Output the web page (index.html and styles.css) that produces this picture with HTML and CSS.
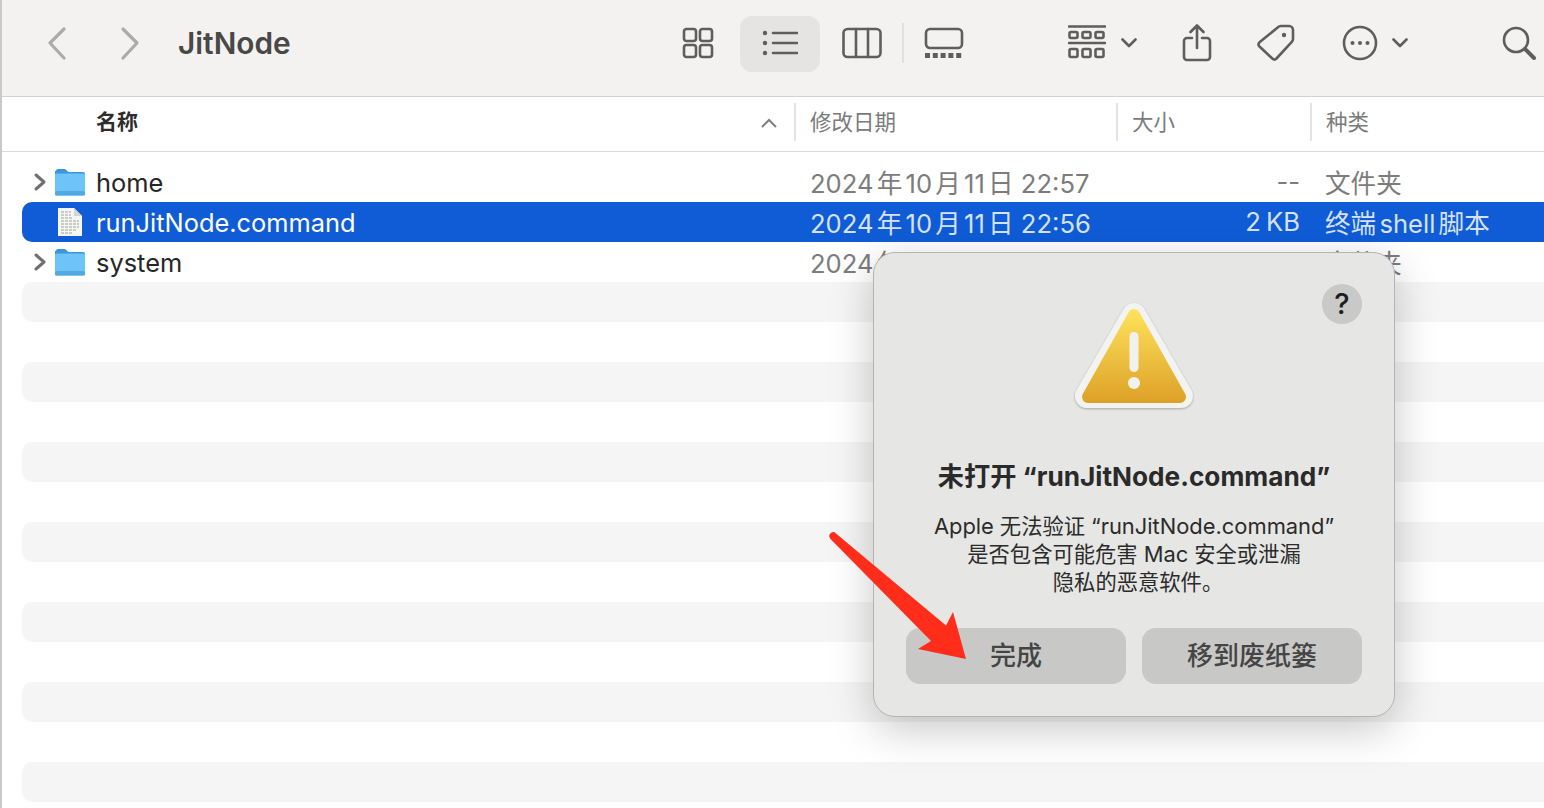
FILE: index.html
```html
<!DOCTYPE html>
<html lang="zh-CN">
<head>
<meta charset="utf-8">
<title>JitNode</title>
<link rel="stylesheet" href="styles.css">
</head>
<body>
<div class="window">
  <header class="toolbar">
    <svg class="ic back" viewBox="0 0 22 36"><path d="M18 4 4 18l14 15" class="thin"/></svg>
    <svg class="ic forward" viewBox="0 0 22 36"><path d="M4 4l14 14L4 33" class="thin"/></svg>
    <h1 class="title">JitNode</h1>
    <svg class="ic grid-ic" viewBox="0 0 32 32"><rect x="2" y="2" width="12" height="12" rx="2.5"/><rect x="18" y="2" width="12" height="12" rx="2.5"/><rect x="2" y="18" width="12" height="12" rx="2.5"/><rect x="18" y="18" width="12" height="12" rx="2.5"/></svg>
    <div class="list-btn">
      <svg class="ic list-ic" viewBox="0 0 36 28"><circle cx="3" cy="4" r="2.2" class="dot"/><circle cx="3" cy="14" r="2.2" class="dot"/><circle cx="3" cy="24" r="2.2" class="dot"/><path d="M11 4h24M11 14h24M11 24h24"/></svg>
    </div>
    <svg class="ic col-ic" viewBox="0 0 40 32"><rect x="1.5" y="2" width="37" height="28" rx="4"/><path d="M14 2v28M26 2v28"/></svg>
    <span class="tb-divider"></span>
    <svg class="ic gal-ic" viewBox="0 0 40 32"><rect x="2" y="2" width="36" height="19" rx="4"/><path class="dash" d="M1 28.500h38"/></svg>
    <svg class="ic grp-ic" viewBox="0 0 38 36"><path d="M1 1.500h36M1 18h36"/><rect x="1.500" y="7" width="8" height="6" rx="1.500"/><rect x="14.500" y="7" width="8" height="6" rx="1.500"/><rect x="27.500" y="7" width="8" height="6" rx="1.500"/><rect x="1.500" y="24" width="8" height="8" rx="1.500"/><rect x="14.500" y="24" width="8" height="8" rx="1.500"/><rect x="27.500" y="24" width="8" height="8" rx="1.500"/></svg>
    <svg class="ic chev chev-a" viewBox="0 0 16 10"><path d="M1.500 1.500 8 8l6.500-6.500"/></svg>
    <svg class="ic share-ic" viewBox="0 0 30 38"><path d="M10 14H5a3 3 0 0 0-3 3v16a3 3 0 0 0 3 3h20a3 3 0 0 0 3-3V17a3 3 0 0 0-3-3h-5"/><path d="M15 24V2M8.500 8 15 1.500 21.500 8"/></svg>
    <svg class="ic tag-ic" viewBox="0 0 38 38"><path d="M24 2h8a4 4 0 0 1 4 4v9a4 4 0 0 1-1.200 2.800L19.500 34.500a3 3 0 0 1-4.200 0L2.500 22.500a3 3 0 0 1 0-4.200L21 3.200A4 4 0 0 1 24 2z"/><circle cx="27" cy="11" r="2.200" class="dot"/></svg>
    <svg class="ic more-ic" viewBox="0 0 36 36"><circle cx="18" cy="18" r="16"/><circle cx="10.500" cy="18" r="2" class="dot"/><circle cx="18" cy="18" r="2" class="dot"/><circle cx="25.500" cy="18" r="2" class="dot"/></svg>
    <svg class="ic chev chev-b" viewBox="0 0 16 10"><path d="M1.500 1.500 8 8l6.500-6.500"/></svg>
    <svg class="ic search-ic" viewBox="0 0 34 34"><circle cx="14" cy="14" r="12"/><path d="M23 23l9 9" class="thick"/></svg>
  </header>

  <div class="table-head">
    <div class="th th-name"><span class="th-name-label">名称</span><svg class="sort" viewBox="0 0 16 10"><path d="M1 9l7-7 7 7"/></svg></div>
    <div class="th th-date">修改日期</div>
    <div class="th th-size">大小</div>
    <div class="th th-kind">种类</div>
  </div>

  <div class="rows">
    <div class="row">
      <div class="cell-name">
        <svg class="disc" viewBox="0 0 14 20"><path d="M3 3l8 7-8 7"/></svg>
        <svg class="folder" viewBox="0 0 30 28"><path d="M1 3a2 2 0 0 1 2-2h7l3.500 3H28a2 2 0 0 1 2 2v6H0V3z" class="f-top"/><rect y="5.500" width="30" height="22" rx="1.500" class="f-body"/><rect y="23" width="30" height="4.500" rx="1.500" class="f-low"/></svg>
        <span>home</span>
      </div>
      <div class="cell-date">2024年10月11日 22:57</div>
      <div class="cell-size">--</div>
      <div class="cell-kind">文件夹</div>
    </div>
    <div class="row selected">
      <div class="cell-name">
        <span class="disc-space"></span>
        <svg class="doc" viewBox="0 0 24 28"><path d="M0 0h16l8 8v20H0z" class="d-page"/><path d="M16 0l8 8h-8z" class="d-fold"/><path d="M3 4h10M3 7h10M3 10h12M3 13h18M3 16h18M3 19h18M3 22h16M3 25h12" class="d-lines"/></svg>
        <span>runJitNode.command</span>
      </div>
      <div class="cell-date">2024年10月11日 22:56</div>
      <div class="cell-size">2 KB</div>
      <div class="cell-kind">终端shell脚本</div>
    </div>
    <div class="row">
      <div class="cell-name">
        <svg class="disc" viewBox="0 0 14 20"><path d="M3 3l8 7-8 7"/></svg>
        <svg class="folder" viewBox="0 0 30 28"><path d="M1 3a2 2 0 0 1 2-2h7l3.500 3H28a2 2 0 0 1 2 2v6H0V3z" class="f-top"/><rect y="5.500" width="30" height="22" rx="1.500" class="f-body"/><rect y="23" width="30" height="4.500" rx="1.500" class="f-low"/></svg>
        <span>system</span>
      </div>
      <div class="cell-date">2024年10月11日 22:57</div>
      <div class="cell-size">--</div>
      <div class="cell-kind">文件夹</div>
    </div>
    <div class="row alt"></div><div class="row"></div>
    <div class="row alt"></div><div class="row"></div>
    <div class="row alt"></div><div class="row"></div>
    <div class="row alt"></div><div class="row"></div>
    <div class="row alt"></div><div class="row"></div>
    <div class="row alt"></div><div class="row"></div>
    <div class="row alt"></div>
  </div>

  <section class="dialog">
    <div class="help">?</div>
    <svg class="warn" viewBox="0 0 118 107">
      <defs>
        <linearGradient id="warnFill" gradientUnits="userSpaceOnUse" x1="0" y1="6" x2="0" y2="100"><stop offset="0" stop-color="#fee35c"/><stop offset="1" stop-color="#dda128"/></linearGradient>
      </defs>
      <polygon class="w-outer" points="59,12 12,93 106,93"/>
      <polygon class="w-inner" points="59,12 13,94 105,94"/>
      <rect class="w-mark" x="54.500" y="29" width="9" height="40" rx="4.500"/>
      <circle class="w-mark" cx="59" cy="80" r="6"/>
    </svg>
    <h2 class="d-title">未打开 “runJitNode.command”</h2>
    <p class="d-body"><span class="lat">Apple</span> 无法验证 <span class="lat">“runJitNode.command”</span><br>是否包含可能危害 <span class="lat">Mac</span> 安全或泄漏<br>隐私的恶意软件<span class="stop">。</span></p>
    <div class="d-actions">
      <button class="d-btn">完成</button>
      <button class="d-btn">移到废纸篓</button>
    </div>
  </section>

  <svg class="arrow" viewBox="0 0 150 140">
    <path d="M8 3.500 118 95.500 125 82 138 129 90 119 103 111 2 8.500Q0 5 3 3 6 1 8 3.500z"/>
  </svg>
</div>
</body>
</html>
```

FILE: styles.css
```css
* { box-sizing: border-box; }
html, body { margin: 0; padding: 0; height: 100%; overflow: hidden; background: #fff; }
body {
  font-family: Inter, "Noto Sans CJK SC", sans-serif;
  color: #262626;
}
.window {
  position: relative;
  width: 1544px;
  height: 808px;
  border-left: 2px solid #c9c9c9;
  overflow: hidden;
  text-autospace: normal;
}

/* toolbar */
.toolbar {
  height: 97px;
  background: #f3f2f1;
  border-bottom: 1px solid #d2d2d2;
  display: flex;
  align-items: center;
  padding-bottom: 9px;
}
.ic { flex: none; fill: none; stroke: #5f5e5c; stroke-width: 2.6; stroke-linecap: round; stroke-linejoin: round; margin-bottom: 2px; }
.ic .dot { fill: #5f5e5c; stroke: none; }
.ic .thin { stroke: #ababaa; stroke-width: 3.2; }
.ic .thick { stroke-width: 4; }
.ic .dash { stroke-width: 5; stroke-dasharray: 5 2.800; stroke-linecap: butt; }
.back { width: 22px; height: 36px; margin-left: 44px; }
.forward { width: 22px; height: 36px; margin-left: 51px; }
.title { margin: 0 0 2px 37px; width: 504px; font-size: 29.800px; font-weight: 600; color: #484847; }
.grid-ic { width: 32px; height: 32px; }
.list-btn { width: 80px; height: 56px; margin-left: 26px; background: #e5e4e3; border-radius: 12px; display: flex; align-items: center; justify-content: center; }
.list-ic { width: 36px; height: 28px; }
.col-ic { width: 40px; height: 32px; margin-left: 22px; }
.tb-divider { width: 2px; height: 40px; margin-left: 20px; margin-bottom: 2px; background: #e1e0df; }
.gal-ic { width: 40px; height: 32px; margin-left: 20px; }
.grp-ic { width: 38px; height: 36px; margin-left: 104px; }
.chev { width: 16px; height: 10px; }
.chev-a { margin-left: 15px; }
.share-ic { width: 30px; height: 38px; margin-left: 45px; }
.tag-ic { width: 38px; height: 38px; margin-left: 45px; }
.more-ic { width: 36px; height: 36px; margin-left: 47px; }
.chev-b { margin-left: 14px; }
.search-ic { width: 34px; height: 34px; margin-left: 94px; }

/* table head */
.table-head {
  height: 55px;
  background: #fff;
  border-bottom: 1px solid #dcdcdc;
  display: grid;
  grid-template-columns: 792px 322px 194px 1fr;
  align-items: center;
  padding-bottom: 5px;
}
.th { font-size: 21.500px; color: #7b7b7b; height: 38px; display: flex; align-items: center; padding: 0 0 3px 14px; border-left: 2px solid #e3e3e3; }
.th-name { border-left: 0; padding: 0 17px 3px 94px; justify-content: space-between; color: #2d2d2d; font-weight: 600; font-size: 21px; }
.sort { width: 16px; height: 10px; fill: none; stroke: #7f7f7f; stroke-width: 2; margin-top: 6px; }

/* rows */
.rows { padding: 10px 0 0 20px; }
.row {
  height: 40px;
  display: grid;
  grid-template-columns: 773px 322px 194px 1fr;
  align-items: center;
  font-size: 25.400px;
  border-radius: 10px 0 0 10px;
  white-space: nowrap;
}
.row.alt { background: #f4f5f4; }
.row.selected { background: #0f5cd6; color: #fff; }
.cell-name { display: flex; align-items: center; padding-left: 11px; }
.disc { width: 14px; height: 20px; fill: none; stroke: #6f6f6f; stroke-width: 3; stroke-linecap: round; stroke-linejoin: round; }
.disc-space { width: 14px; height: 20px; }
.folder { width: 30px; height: 28px; margin-left: 8px; margin-right: 11px; }
.f-top { fill: #3a96dc; }
.f-body { fill: #6ec3f8; }
.f-low { fill: #52a8e2; }
.doc { width: 24px; height: 28px; margin-left: 11px; margin-right: 14px; }
.d-page { fill: #f5f5f3; }
.d-fold { fill: #d3d3d1; }
.d-lines { fill: none; stroke: #bdbdbb; stroke-width: 1.500; stroke-dasharray: 3 1; }
.cell-date, .cell-kind, .cell-size { font-size: 25.600px; padding-bottom: 2px; color: #7c7c7c; }
.cell-date { padding-left: 15px; }
.cell-size { text-align: right; padding-right: 11px; word-spacing: -2px; }
.cell-kind { padding-left: 14px; }
.selected .cell-date, .selected .cell-size, .selected .cell-kind { color: #d6e2f6; }

/* dialog */
.dialog {
  position: absolute;
  left: 871px;
  top: 252px;
  width: 522px;
  height: 465px;
  background: #e6e6e4;
  border: 1px solid #b4b4b2;
  border-radius: 22px;
  box-shadow: 0 12px 44px rgba(0,0,0,.22);
  display: flex;
  flex-direction: column;
  align-items: center;
  padding: 50px 31px 0;
}
.help {
  position: absolute;
  right: 32px;
  top: 31px;
  width: 40px;
  height: 40px;
  border-radius: 50%;
  background: #c9c9c7;
  color: #1e1e1e;
  font-size: 29px;
  font-weight: 500;
  text-align: center;
  line-height: 40px;
}
.warn { width: 118px; height: 107px; flex: none; filter: drop-shadow(0 1px 1px rgba(0,0,0,.28)); }
.w-outer { fill: #f3f3f2; stroke: #f3f3f2; stroke-width: 24; stroke-linejoin: round; }
.w-inner { fill: url(#warnFill); stroke: url(#warnFill); stroke-width: 12; stroke-linejoin: round; }
.w-mark { fill: #f1f1f0; }
.d-title { margin: 50px 0 0; font-size: 26.200px; line-height: 34px; font-weight: 700; color: #2a2a2a; white-space: nowrap; }
.d-body { margin: 18px 0 0; font-size: 21.300px; line-height: 28px; text-align: center; color: #2b2b2b; white-space: nowrap; }
.lat { font-size: 21.900px; }
.stop { margin-right: -8px; }
.d-actions { display: flex; gap: 16px; margin-top: 32px; }
.d-btn {
  width: 220px;
  height: 56px;
  border: 0;
  border-radius: 14px;
  background: #c8c8c6;
  color: #454545;
  font: 500 26px Inter, "Noto Sans CJK SC", sans-serif;
  padding: 0 0 5px;
}

/* annotation */
.arrow { position: absolute; left: 826px; top: 530px; width: 150px; height: 140px; fill: #ff2d1a; }
```
